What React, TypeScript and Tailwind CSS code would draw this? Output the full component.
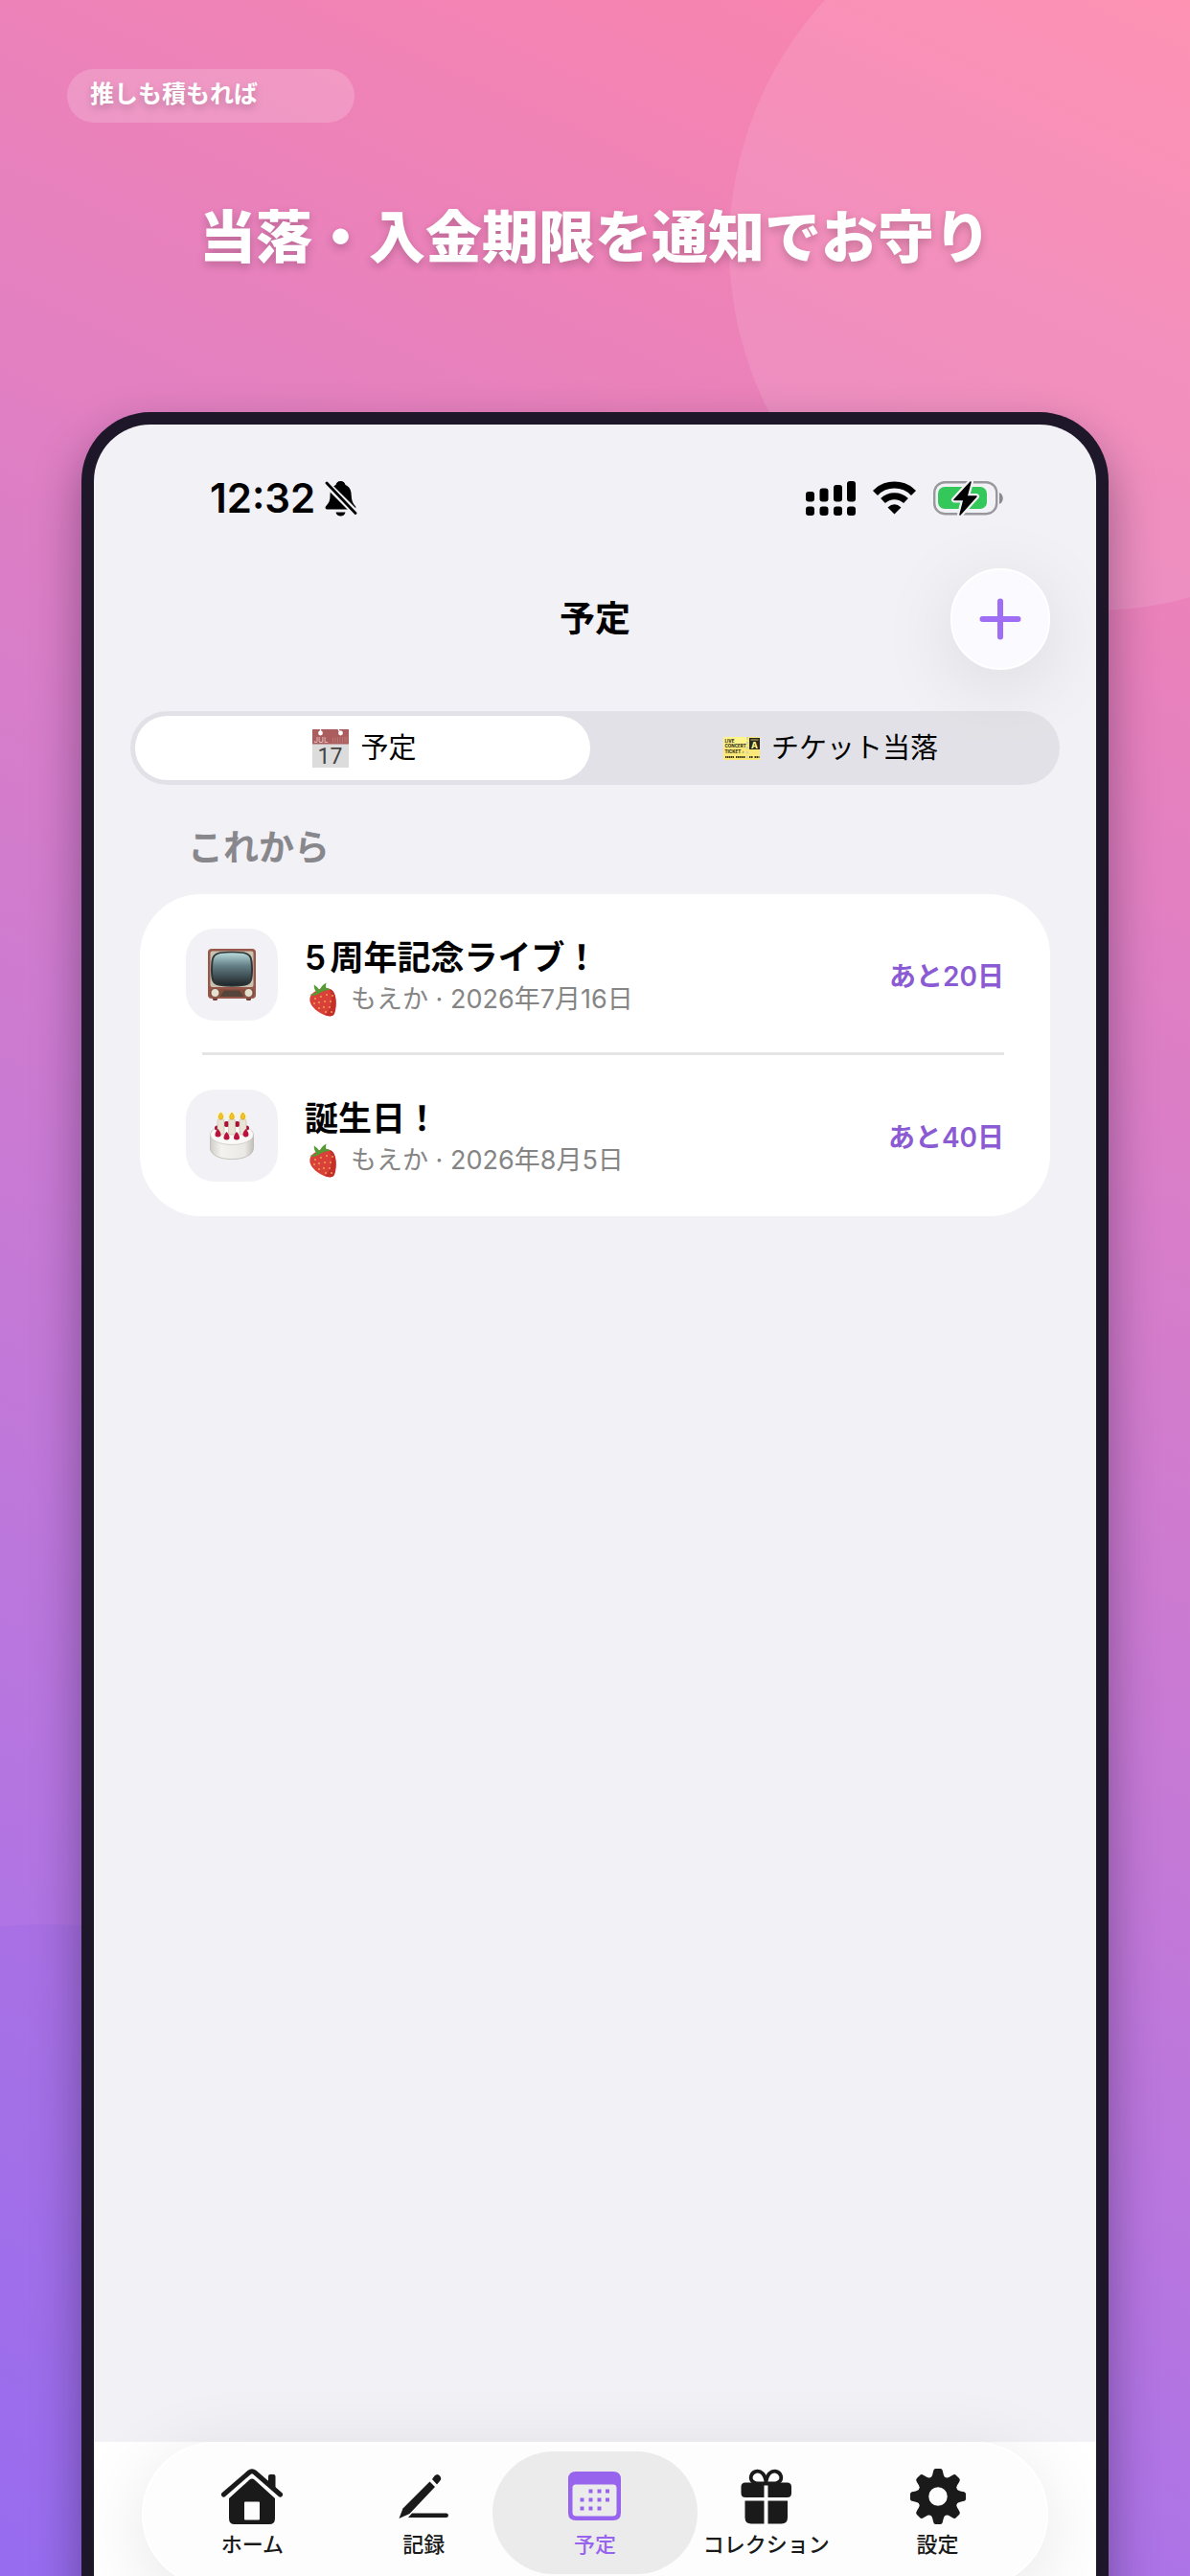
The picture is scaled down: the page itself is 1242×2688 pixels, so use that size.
import { ReactNode } from "react"

const BellOff = () => (
    <svg width="34" height="38" viewBox="0 0 34 38" aria-hidden="true">
        <path d="M16.500 1c-3 0-4.600 2-5 4C7 7 5.500 11 5.500 16c0 6-1.500 8-4.200 11C0 28.500.500 30.500 3 30.500h27c2.500 0 3-2 1.700-3.500C29 24 28 21 27.700 16c0-5-1.500-9-6.200-11-.400-2-2-4-5-4Z" />
        <path d="M11.500 33.500h10c-.500 2.500-2.500 4-5 4s-4.500-1.500-5-4Z" />
        <path d="M1.500 3.500 32 34" stroke="#f2f1f6" strokeWidth="7" />
        <path d="M2 3 32 34.500" stroke="#000" strokeWidth="2.800" strokeLinecap="round" />
    </svg>
)

const Signal = () => (
    <svg width="52" height="38" viewBox="0 0 52 38" aria-hidden="true">
        <rect x="0" y="12" width="9" height="10.500" rx="3" />
        <rect x="14.500" y="8.500" width="9" height="14" rx="3" />
        <rect x="29" y="5" width="9" height="17.500" rx="3" />
        <rect x="43" y="1" width="9" height="21.500" rx="3" />
        <rect x="0" y="27.500" width="9" height="9.500" rx="3" />
        <rect x="14.500" y="27.500" width="9" height="9.500" rx="3" />
        <rect x="29" y="27.500" width="9" height="9.500" rx="3" />
        <rect x="43" y="27.500" width="9" height="9.500" rx="3" />
    </svg>
)

const Wifi = () => (
    <svg width="45" height="36" viewBox="0 0 45 36" fill="none" stroke="#000" strokeWidth="7" aria-hidden="true">
        <path d="M2.500 12.500a28 28 0 0 1 40 0" />
        <path d="M10.500 20.500a17.500 17.500 0 0 1 24 0" />
        <path d="M15.500 27.500q7-6.500 14 0l-7 7Z" fill="#000" stroke="none" />
    </svg>
)

const Battery = () => (
    <svg width="74" height="38" viewBox="0 0 74 38" aria-hidden="true">
        <rect x="1.200" y="2.200" width="65" height="33" rx="11" fill="none" stroke="#98989d" strokeWidth="2.400" />
        <path d="M69 13c5 2 5 10 0 12Z" fill="#8a8a8e" />
        <rect x="5" y="7" width="51" height="23" rx="7" fill="#34c759" />
        <path d="M39 2 22 20.500h10L28 36l17-19H35Z" stroke="#f2f1f6" strokeWidth="6" strokeLinejoin="round" />
        <path d="M39 2 22 20.500h10L28 36l17-19H35Z" stroke="#000" strokeWidth="1.500" strokeLinejoin="round" />
    </svg>
)

const CalendarEmoji = () => (
    <svg width="38" height="40" viewBox="0 0 38 40" aria-hidden="true">
        <rect width="38" height="40" fill="#dcdcdc" />
        <rect width="38" height="15.500" fill="#ab5c5c" />
        <path d="M8.500 0v4M27 0l2.500 4" stroke="#fff" strokeWidth="1.200" />
        <circle cx="8.500" cy="4" r="2.400" fill="#fff" />
        <circle cx="29.500" cy="4" r="2.400" fill="#fff" />
        <text x="1.500" y="13.800" fontSize="8" fill="#e6cccc" fontFamily="Inter">JUL</text>
        <path d="M21.500 9v5M24 8.500v5.500M26.500 8.500v5.500M29 8v6M31.500 8v6M34 7.500v6.500M36 7.500v6" stroke="#bd7d7d" strokeWidth=".8" />
        <text x="18.500" y="35.500" fontSize="23" fill="#444" textAnchor="middle" fontFamily="Roboto">17</text>
    </svg>
)

const TicketEmoji = () => (
    <svg width="38" height="24" viewBox="0 0 38 24" fontFamily="Inter" fontWeight="800" fill="#3a3618" aria-hidden="true">
        <path d="M0 0h38v24H0Z" fill="#fbe878" />
        <path d="M0 0h24v11H0Z" fill="#fdf58c" />
        <rect x="27" y="1" width="11" height="12" fill="#2c2a1a" />
        <text x="1.500" y="5.500" fontSize="4.500">LIVE</text>
        <text x="1.500" y="11" fontSize="4.500">CONCERT</text>
        <text x="1.500" y="16.500" fontSize="4.500">TICKET ♪</text>
        <path d="M2 21h9M13 21h10M27 21h4M32.500 21h5" stroke="#3a3618" strokeWidth="2" strokeDasharray="1.500 .5" />
        <path d="M25 0v24" stroke="#c9cbd0" strokeWidth="1.600" strokeDasharray="2.500 2.500" />
        <text x="32.500" y="12" fontSize="9" fill="#fff38a" textAnchor="middle">A</text>
        <path d="M28.500 3h8" stroke="#a8a060" strokeWidth="1.200" />
    </svg>
)

const TvEmoji = () => (
    <svg width="50" height="54" viewBox="0 0 50 54" aria-hidden="true">
        <defs>
            <linearGradient id="tvScreen" x1="0" y1="0" x2="0" y2="1">
                <stop offset="0" stopColor="#b9dadb" />
                <stop offset=".4" stopColor="#647f85" />
                <stop offset="1" stopColor="#20262a" />
            </linearGradient>
        </defs>
        <rect x="5" y="50" width="5" height="4" rx="1.500" fill="#6d3a2c" />
        <rect x="40" y="50" width="5" height="4" rx="1.500" fill="#6d3a2c" />
        <rect width="50" height="52" rx="4" fill="#97574a" />
        <rect x="2.500" y="2.500" width="45" height="37.500" rx="2" fill="#c9c3b0" />
        <path d="M12 3.500Q25 2 38 3.500Q46 5 46.500 13Q47.500 22 46.500 30Q46 37.500 38 38.800Q25 40.500 12 38.800Q4 37.500 3.500 30Q2.500 22 3.500 13Q4 5 12 3.500Z" fill="#2e3638" />
        <path d="M13 5Q25 3.500 37 5Q44 6 44.500 13Q45.500 22 44.500 29Q44 36 37 37.300Q25 39 13 37.300Q6 36 5.500 29Q4.500 22 5.500 13Q6 6 13 5Z" fill="url(#tvScreen)" />
        <path d="M2.500 42h45v8h-45Z" fill="#8a4e3e" />
        <path d="M17 43.500h16l4.500 6.500h-25Z" fill="#55443a" />
        <circle cx="7.500" cy="46" r="4.500" fill="#e6e1cf" stroke="#5e3529" strokeWidth=".8" />
        <circle cx="42.500" cy="46" r="4.500" fill="#e6e1cf" stroke="#5e3529" strokeWidth=".8" />
    </svg>
)

const CakeEmoji = () => (
    <svg width="48" height="50" viewBox="0 0 48 50" aria-hidden="true">
        <defs>
            <linearGradient id="cakeSide" x1="0" y1="0" x2="1" y2="0">
                <stop offset="0" stopColor="#cfcdc8" />
                <stop offset=".25" stopColor="#f3f2ef" />
                <stop offset=".8" stopColor="#ebe9e5" />
                <stop offset="1" stopColor="#c2bfb9" />
            </linearGradient>
        </defs>
        <path d="M1.500 24v14c0 15.500 45 15.500 45 0V24Z" fill="url(#cakeSide)" stroke="#b9b6b0" strokeWidth=".8" />
        <ellipse cx="24" cy="24" rx="22.500" ry="10.500" fill="#f9f9f7" stroke="#cbc8c2" strokeWidth=".8" />
        <g fill="#a80f36">
            <circle cx="8.500" cy="17" r="2.500" />
            <circle cx="18.500" cy="13" r="3" />
            <circle cx="29.500" cy="13" r="3" />
            <circle cx="39.500" cy="17" r="2.500" />
        </g>
        <g fill="#fbf5c8">
            <circle cx="12.500" cy="4.500" r="4.500" />
            <circle cx="24" cy="4.500" r="4.500" />
            <circle cx="35.500" cy="4.500" r="4.500" />
        </g>
        <g fill="#e9e4d6" stroke="#c4bda9" strokeWidth=".6">
            <rect x="9" y="8" width="7" height="16" rx="1.500" />
            <rect x="20.500" y="8" width="7" height="16" rx="1.500" />
            <rect x="32" y="8" width="7" height="16" rx="1.500" />
        </g>
        <g fill="#f2c61f" stroke="#d79a17" strokeWidth=".7">
            <path d="M12.500 1c3.500 4 2.500 7 0 7s-3.500-3 0-7Z" />
            <path d="M24 1c3.500 4 2.500 7 0 7s-3.500-3 0-7Z" />
            <path d="M35.500 1c3.500 4 2.500 7 0 7s-3.500-3 0-7Z" />
        </g>
        <g fill="#b8123d">
            <path d="M9.500 18c4.500 5 3.500 8.500 0 8.500S5 23 9.500 18Z" />
            <path d="M18.500 21c4.500 5 3.500 8.500 0 8.500S14 26 18.500 21Z" />
            <path d="M29 21c4.500 5 3.500 8.500 0 8.500S24.500 26 29 21Z" />
            <path d="M38.500 18c4.500 5 3.500 8.500 0 8.500S34 23 38.500 18Z" />
        </g>
    </svg>
)

const Strawberry = () => (
    <svg width="30" height="36" viewBox="0 0 30 36" aria-hidden="true">
        <path d="M8 9c6-4 15-4 18 1 3 6 3 15 1 22-1 3.500-4 4-8 3C10 32 3 26 1.500 20 .5 14 4 11 8 9Z" fill="#d9403a" />
        <path d="M22 7c6 2 7 10 6.800 16-.3 5-1 9-2.600 11-2 1.800-6 1.200-9 0 6-4 9-18 4.800-27Z" fill="#c42e2b" />
        <path d="M1 13c3-1 5-1 7-3C6 7 5.500 5 5.800 2.500 8 4 10 6 11.500 8 13 5 15 2 18.500.5 18 3 18 5 18.500 6c2 .2 3.500 1 4.500 2-4-.5-8 1-11 3-3 2.500-6 3.500-11 2Z" fill="#569a35" />
        <g fill="#edb14e">
            <circle cx="7" cy="17" r=".9" />
            <circle cx="13" cy="15" r=".9" />
            <circle cx="19" cy="13" r=".9" />
            <circle cx="25" cy="14" r=".9" />
            <circle cx="6" cy="22" r=".9" />
            <circle cx="11" cy="21" r=".9" />
            <circle cx="17" cy="20" r=".9" />
            <circle cx="23" cy="20" r=".9" />
            <circle cx="11" cy="27" r=".9" />
            <circle cx="16" cy="26" r=".9" />
            <circle cx="22" cy="26" r=".9" />
            <circle cx="18" cy="31" r=".9" />
            <circle cx="24" cy="31" r=".9" />
        </g>
    </svg>
)

const HomeIcon = () => (
    <svg width="64" height="58" viewBox="0 0 64 58" fill="currentColor" aria-hidden="true">
        <path d="M49 18V8q0-2 2-2h3.500q2 0 2 2v16Z" />
        <path d="M2.500 27 29 4q3-2.500 6 0l26.500 23" fill="none" stroke="currentColor" strokeWidth="5" strokeLinecap="round" />
        <path fillRule="evenodd" d="M8 31 29.500 11.500q2.500-2 5 0L56 31v21q0 6-6 6H14q-6 0-6-6ZM25 34.500q-1 0-1 1v17q0 1 1 1h14q1 0 1-1v-17q0-1-1-1Z" />
    </svg>
)

const PencilIcon = () => (
    <svg width="54" height="58" viewBox="0 0 54 58" fill="currentColor" aria-hidden="true">
        <path d="M33.500 13.500 39 19 12.500 47 1.500 52 5.500 41.500Z" />
        <path d="m36 11 2.500-3.500q3-3 5.500 0t0 5.500L41 16.500Z" />
        <path d="M15 46.500h36q2 .300 2 2.300t-2 2.300H11Z" />
    </svg>
)

const CalendarIcon = () => (
    <svg width="56" height="58" viewBox="0 -3 56 58" fill="currentColor" aria-hidden="true">
        <path fillRule="evenodd" d="M8 0h39q8 0 8 8v35q0 8-8 8H8q-8 0-8-8V8q0-8 8-8Zm0 13.500q-3.500 0-3.500 3.500v25.500q0 4 4 4h38q4 0 4-4V17q0-3.500-3.500-3.500Z" />
        <path d="M21.500 18.500h4v4h-4ZM30.500 18.500h4v4h-4ZM39 18.500h4v4h-4ZM12.500 27.500h4v4h-4ZM21.500 27.500h4v4h-4ZM30.500 27.500h4v4h-4ZM39 27.500h4v4h-4ZM12.500 36.500h4v4h-4ZM21.500 36.500h4v4h-4ZM30.500 36.500h4v4h-4Z" />
    </svg>
)

const GiftIcon = () => (
    <svg width="54" height="58" viewBox="0 0 54 58" fill="currentColor" aria-hidden="true">
        <path d="M26.500 15.500H17c-5-1-7-4-6-8 1.500-5 8-6.500 12-2.500 2.500 3 3.500 6 3.500 10.500ZM26.500 15.500H36c5-1 7-4 6-8-1.500-5-8-6.500-12-2.500-2.500 3-3.500 6-3.500 10.500Z" fill="none" stroke="currentColor" strokeWidth="3.800" />
        <path d="M24.500 14.500v15.500H5q-4.500 0-4.500-4.500v-6.500q0-4.500 4.500-4.500ZM28.500 14.500H48.500q4.500 0 4.500 4.500v6.500q0 4.500-4.500 4.500h-20Z" />
        <path d="M24.500 33.500V57.500H11q-6.500 0-6.500-6.500V33.500ZM28.500 33.500H49V51q0 6.500-6.500 6.500h-14Z" />
    </svg>
)

const GearIcon = () => (
    <svg width="58" height="58" viewBox="-29 -29 58 58" fill="currentColor" aria-hidden="true">
        <circle r="15.500" fill="none" stroke="currentColor" strokeWidth="11.500" />
        {[0, 45, 90, 135, 180, 225, 270, 315].map((angle) => (
            <path key={angle} d="M-9-18q3-2 4-8 .5-3 2.500-3h5q2 0 2.500 3 1 6 4 8Z" transform={`rotate(${angle})`} />
        ))}
    </svg>
)

type EventRowProps = {
    icon: ReactNode
    title: string
    date: string
    left: string
}

const EventRow = ({ icon, title, date, left }: EventRowProps) => (
    <li className="flex items-center px-12 py-9">
        <div className="flex h-24 w-24 shrink-0 items-center justify-center rounded-[30px] bg-[#f2f1f6]">
            {icon}
        </div>
        <div className="ml-7 flex flex-1 flex-col pt-2">
            <p className="text-[35px] leading-[44px] font-semibold text-black [text-autospace:normal]">{title}</p>
            <p className="flex items-center gap-[14px] pl-1 text-[27px] leading-[44px] text-[#858585]">
                <Strawberry />
                <span>もえか · {date}</span>
            </p>
        </div>
        <p className="pt-1 text-[28px] leading-[44px] font-semibold text-[#8a5bd3]">{left}</p>
    </li>
)

const tabs = [
    { label: "ホーム", icon: <HomeIcon />, active: false },
    { label: "記録", icon: <PencilIcon />, active: false },
    { label: "予定", icon: <CalendarIcon />, active: true },
    { label: "コレクション", icon: <GiftIcon />, active: false },
    { label: "設定", icon: <GearIcon />, active: false },
]

const App = () => {
    return (
        <div className="relative flex h-screen flex-col overflow-hidden bg-[linear-gradient(205deg,#fd86ab_0%,#df7fc4_32%,#9b6ff2_100%)] font-['Inter','Noto_Sans_CJK_JP',sans-serif]">
            {/* Background circles */}
            <div className="absolute -top-[123px] -right-[279px] h-[760px] w-[760px] rounded-full bg-white/10" />
            <div className="absolute top-[2008px] -left-[550px] h-[1200px] w-[1200px] rounded-full bg-[#8a62e6]/20" />

            <header className="relative px-[70px] pt-18">
                <p className="h-14 w-[300px] rounded-full bg-white/18 pl-6 text-[25px] leading-[52px] font-bold text-white text-shadow-[0_4px_8px_rgb(0_0_0/0.2)]">
                    推しも積もれば
                </p>
                <h1 className="pt-[78px] text-center text-[59px] leading-[84px] font-black text-white text-shadow-[0_4px_10px_rgb(0_0_0/0.2)]">
                    当落・入金期限を通知でお守り
                </h1>
            </header>

            <div className="relative mx-[85px] mt-[140px] -mb-10 flex flex-1 flex-col rounded-t-[72px] border-x-[13px] border-t-[13px] border-[#1e1629] bg-[#f2f1f6] shadow-[0_24px_50px_rgb(20_10_40/0.4)]">
                {/* Status bar */}
                <div className="flex h-[150px] items-center justify-between pt-1 pr-24 pl-[121px]">
                    <div className="flex items-center gap-[10px]">
                        <span className="text-[42px] leading-[48px] font-semibold">12:32</span>
                        <BellOff />
                    </div>
                    <div className="flex items-center gap-[18px]">
                        <Signal />
                        <Wifi />
                        <Battery />
                    </div>
                </div>

                <div className="grid h-[106px] grid-cols-[1fr_auto_1fr] items-center px-12">
                    <h2 className="col-start-2 text-[37px] leading-[48px] font-semibold">予定</h2>
                    <button aria-label="追加" className="flex h-[106px] w-[104px] items-center justify-center justify-self-end rounded-full border-2 border-white bg-[#fafaff] text-[#a06df5] shadow-[0_16px_80px_rgb(0_0_0/0.1)]">
                        <svg width="44" height="44" viewBox="0 0 44 44" stroke="currentColor" strokeWidth="6" strokeLinecap="round" aria-hidden="true">
                            <path d="M22 3.500v37M3.500 22h37" />
                        </svg>
                    </button>
                </div>

                {/* Segments */}
                <div className="mx-[38px] mt-[43px] grid h-[77px] grid-cols-2 rounded-full bg-[#787880]/13 p-[5px] text-[29px] leading-[40px]">
                    <button className="mr-[5px] flex items-center justify-center gap-3 rounded-full bg-white pl-1">
                        <CalendarEmoji />
                        予定
                    </button>
                    <button className="flex items-center justify-center gap-3 pl-3">
                        <TicketEmoji />
                        チケット当落
                    </button>
                </div>

                <h3 className="mt-10 px-[98px] text-[37px] leading-[52px] font-semibold text-[#87878c]">これから</h3>

                <ul className="mx-12 mt-[22px] rounded-[64px] bg-white">
                    <EventRow icon={<TvEmoji />} title="5周年記念ライブ！" date="2026年7月16日" left="あと20日" />
                    <li aria-hidden="true" className="-mt-[3px] mr-12 ml-[65px] h-[3px] bg-[#e5e5e6]" />
                    <EventRow icon={<CakeEmoji />} title="誕生日！" date="2026年8月5日" left="あと40日" />
                </ul>

                {/* Tab bar */}
                <div className="mt-auto bg-white px-[50px] pb-7">
                    <nav className="grid grid-cols-5 rounded-full border-2 border-white bg-[#fdfdfd] px-6 pt-2 pb-3 shadow-[0_16px_80px_rgb(0_0_0/0.1)]">
                        {tabs.map((tab) => (
                            <a
                                key={tab.label}
                                href="#"
                                className={
                                    tab.active
                                        ? "-mx-[18px] flex h-32 flex-col items-center rounded-full bg-[#ebebeb] pt-[18px] text-[#9864ee]"
                                        : "flex h-32 flex-col items-center pt-[18px] text-[#1a1a1a]"
                                }
                            >
                                {tab.icon}
                                <span className="mt-[6px] text-[22px] leading-[30px] font-medium whitespace-nowrap">{tab.label}</span>
                            </a>
                        ))}
                    </nav>
                </div>
            </div>
        </div>
    )
}

export default App
